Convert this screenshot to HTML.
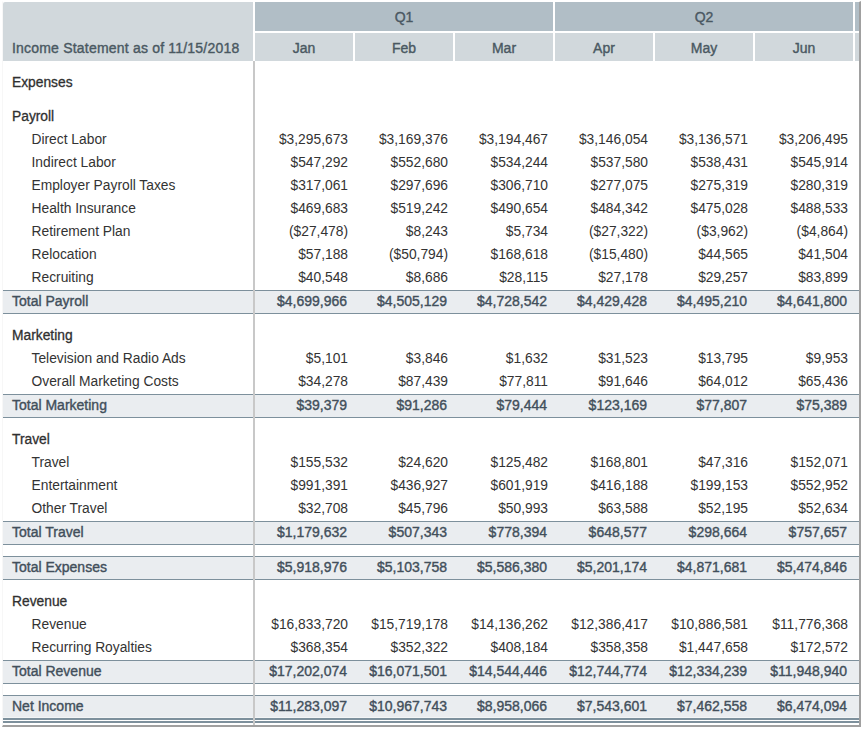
<!DOCTYPE html><html><head><meta charset="utf-8"><style>
html,body{margin:0;padding:0;background:#fff;}
body{width:863px;height:729px;overflow:hidden;position:relative;font-family:"Liberation Sans",sans-serif;}
.b{position:absolute;}
.t{position:absolute;white-space:nowrap;height:23px;line-height:23px;font-size:14px;}
.r{text-align:right;}
.hd{font-size:14px;color:#4a5862;-webkit-text-stroke:0.38px #4a5862;}
.sec{font-size:13.8px;color:#303030;-webkit-text-stroke:0.3px #303030;}
.lbl{font-size:13.8px;color:#333333;}
.num{font-size:13.8px;color:#333333;}
.tot{font-size:14px;color:#424f5b;-webkit-text-stroke:0.38px #424f5b;}

</style></head><body>
<div class="b" style="left:2px;top:1px;width:856px;height:723px;background:#fff;border-style:solid;border-width:1px 2px 2px 1px;border-color:#fff #a0a0a0 #a0a0a0 #f7f7f7"></div>
<div class="b" style="left:3px;top:2px;width:250px;height:59px;background:#d1d8dc;border-top-left-radius:2px"></div>
<div class="t hd" style="left:12px;top:37px;letter-spacing:0.2px">Income Statement as of 11/15/2018</div>
<div class="b" style="left:255px;top:2px;width:298px;height:29px;background:#b1bec6"></div>
<div class="t hd" style="left:255px;top:6px;width:298px;text-align:center">Q1</div>
<div class="b" style="left:555px;top:2px;width:298px;height:29px;background:#b1bec6"></div>
<div class="t hd" style="left:555px;top:6px;width:298px;text-align:center">Q2</div>
<div class="b" style="left:855px;top:2px;width:4px;height:29px;background:#b1bec6"></div>
<div class="b" style="left:255px;top:33px;width:98px;height:28px;background:#d1d8dc"></div>
<div class="t hd" style="left:255px;top:37px;width:98px;text-align:center">Jan</div>
<div class="b" style="left:355px;top:33px;width:98px;height:28px;background:#d1d8dc"></div>
<div class="t hd" style="left:355px;top:37px;width:98px;text-align:center">Feb</div>
<div class="b" style="left:455px;top:33px;width:98px;height:28px;background:#d1d8dc"></div>
<div class="t hd" style="left:455px;top:37px;width:98px;text-align:center">Mar</div>
<div class="b" style="left:555px;top:33px;width:98px;height:28px;background:#d1d8dc"></div>
<div class="t hd" style="left:555px;top:37px;width:98px;text-align:center">Apr</div>
<div class="b" style="left:655px;top:33px;width:98px;height:28px;background:#d1d8dc"></div>
<div class="t hd" style="left:655px;top:37px;width:98px;text-align:center">May</div>
<div class="b" style="left:755px;top:33px;width:98px;height:28px;background:#d1d8dc"></div>
<div class="t hd" style="left:755px;top:37px;width:98px;text-align:center">Jun</div>
<div class="b" style="left:855px;top:33px;width:4px;height:28px;background:#d1d8dc"></div>
<div class="t sec" style="left:12px;top:71px">Expenses</div>
<div class="t sec" style="left:12px;top:105px">Payroll</div>
<div class="t lbl" style="left:31.5px;top:128px">Direct Labor</div>
<div class="t r num" style="right:515px;top:128px">$3,295,673</div>
<div class="t r num" style="right:415px;top:128px">$3,169,376</div>
<div class="t r num" style="right:315px;top:128px">$3,194,467</div>
<div class="t r num" style="right:215px;top:128px">$3,146,054</div>
<div class="t r num" style="right:115px;top:128px">$3,136,571</div>
<div class="t r num" style="right:15px;top:128px">$3,206,495</div>
<div class="t lbl" style="left:31.5px;top:151px">Indirect Labor</div>
<div class="t r num" style="right:515px;top:151px">$547,292</div>
<div class="t r num" style="right:415px;top:151px">$552,680</div>
<div class="t r num" style="right:315px;top:151px">$534,244</div>
<div class="t r num" style="right:215px;top:151px">$537,580</div>
<div class="t r num" style="right:115px;top:151px">$538,431</div>
<div class="t r num" style="right:15px;top:151px">$545,914</div>
<div class="t lbl" style="left:31.5px;top:174px">Employer Payroll Taxes</div>
<div class="t r num" style="right:515px;top:174px">$317,061</div>
<div class="t r num" style="right:415px;top:174px">$297,696</div>
<div class="t r num" style="right:315px;top:174px">$306,710</div>
<div class="t r num" style="right:215px;top:174px">$277,075</div>
<div class="t r num" style="right:115px;top:174px">$275,319</div>
<div class="t r num" style="right:15px;top:174px">$280,319</div>
<div class="t lbl" style="left:31.5px;top:197px">Health Insurance</div>
<div class="t r num" style="right:515px;top:197px">$469,683</div>
<div class="t r num" style="right:415px;top:197px">$519,242</div>
<div class="t r num" style="right:315px;top:197px">$490,654</div>
<div class="t r num" style="right:215px;top:197px">$484,342</div>
<div class="t r num" style="right:115px;top:197px">$475,028</div>
<div class="t r num" style="right:15px;top:197px">$488,533</div>
<div class="t lbl" style="left:31.5px;top:220px">Retirement Plan</div>
<div class="t r num" style="right:515px;top:220px">($27,478)</div>
<div class="t r num" style="right:415px;top:220px">$8,243</div>
<div class="t r num" style="right:315px;top:220px">$5,734</div>
<div class="t r num" style="right:215px;top:220px">($27,322)</div>
<div class="t r num" style="right:115px;top:220px">($3,962)</div>
<div class="t r num" style="right:15px;top:220px">($4,864)</div>
<div class="t lbl" style="left:31.5px;top:243px">Relocation</div>
<div class="t r num" style="right:515px;top:243px">$57,188</div>
<div class="t r num" style="right:415px;top:243px">($50,794)</div>
<div class="t r num" style="right:315px;top:243px">$168,618</div>
<div class="t r num" style="right:215px;top:243px">($15,480)</div>
<div class="t r num" style="right:115px;top:243px">$44,565</div>
<div class="t r num" style="right:15px;top:243px">$41,504</div>
<div class="t lbl" style="left:31.5px;top:266px">Recruiting</div>
<div class="t r num" style="right:515px;top:266px">$40,548</div>
<div class="t r num" style="right:415px;top:266px">$8,686</div>
<div class="t r num" style="right:315px;top:266px">$28,115</div>
<div class="t r num" style="right:215px;top:266px">$27,178</div>
<div class="t r num" style="right:115px;top:266px">$29,257</div>
<div class="t r num" style="right:15px;top:266px">$83,899</div>
<div class="b" style="left:3px;top:290px;width:856px;height:1px;background:#7d909c"></div>
<div class="b" style="left:3px;top:291px;width:856px;height:22px;background:#eaedf0"></div>
<div class="b" style="left:3px;top:313px;width:856px;height:1px;background:#7d909c"></div>
<div class="t tot" style="left:12px;top:290px">Total Payroll</div>
<div class="t r tot" style="right:516px;top:290px">$4,699,966</div>
<div class="t r tot" style="right:416px;top:290px">$4,505,129</div>
<div class="t r tot" style="right:316px;top:290px">$4,728,542</div>
<div class="t r tot" style="right:216px;top:290px">$4,429,428</div>
<div class="t r tot" style="right:116px;top:290px">$4,495,210</div>
<div class="t r tot" style="right:16px;top:290px">$4,641,800</div>
<div class="t sec" style="left:12px;top:324px">Marketing</div>
<div class="t lbl" style="left:31.5px;top:347px">Television and Radio Ads</div>
<div class="t r num" style="right:515px;top:347px">$5,101</div>
<div class="t r num" style="right:415px;top:347px">$3,846</div>
<div class="t r num" style="right:315px;top:347px">$1,632</div>
<div class="t r num" style="right:215px;top:347px">$31,523</div>
<div class="t r num" style="right:115px;top:347px">$13,795</div>
<div class="t r num" style="right:15px;top:347px">$9,953</div>
<div class="t lbl" style="left:31.5px;top:370px">Overall Marketing Costs</div>
<div class="t r num" style="right:515px;top:370px">$34,278</div>
<div class="t r num" style="right:415px;top:370px">$87,439</div>
<div class="t r num" style="right:315px;top:370px">$77,811</div>
<div class="t r num" style="right:215px;top:370px">$91,646</div>
<div class="t r num" style="right:115px;top:370px">$64,012</div>
<div class="t r num" style="right:15px;top:370px">$65,436</div>
<div class="b" style="left:3px;top:394px;width:856px;height:1px;background:#7d909c"></div>
<div class="b" style="left:3px;top:395px;width:856px;height:22px;background:#eaedf0"></div>
<div class="b" style="left:3px;top:417px;width:856px;height:1px;background:#7d909c"></div>
<div class="t tot" style="left:12px;top:394px">Total Marketing</div>
<div class="t r tot" style="right:516px;top:394px">$39,379</div>
<div class="t r tot" style="right:416px;top:394px">$91,286</div>
<div class="t r tot" style="right:316px;top:394px">$79,444</div>
<div class="t r tot" style="right:216px;top:394px">$123,169</div>
<div class="t r tot" style="right:116px;top:394px">$77,807</div>
<div class="t r tot" style="right:16px;top:394px">$75,389</div>
<div class="t sec" style="left:12px;top:428px">Travel</div>
<div class="t lbl" style="left:31.5px;top:451px">Travel</div>
<div class="t r num" style="right:515px;top:451px">$155,532</div>
<div class="t r num" style="right:415px;top:451px">$24,620</div>
<div class="t r num" style="right:315px;top:451px">$125,482</div>
<div class="t r num" style="right:215px;top:451px">$168,801</div>
<div class="t r num" style="right:115px;top:451px">$47,316</div>
<div class="t r num" style="right:15px;top:451px">$152,071</div>
<div class="t lbl" style="left:31.5px;top:474px">Entertainment</div>
<div class="t r num" style="right:515px;top:474px">$991,391</div>
<div class="t r num" style="right:415px;top:474px">$436,927</div>
<div class="t r num" style="right:315px;top:474px">$601,919</div>
<div class="t r num" style="right:215px;top:474px">$416,188</div>
<div class="t r num" style="right:115px;top:474px">$199,153</div>
<div class="t r num" style="right:15px;top:474px">$552,952</div>
<div class="t lbl" style="left:31.5px;top:497px">Other Travel</div>
<div class="t r num" style="right:515px;top:497px">$32,708</div>
<div class="t r num" style="right:415px;top:497px">$45,796</div>
<div class="t r num" style="right:315px;top:497px">$50,993</div>
<div class="t r num" style="right:215px;top:497px">$63,588</div>
<div class="t r num" style="right:115px;top:497px">$52,195</div>
<div class="t r num" style="right:15px;top:497px">$52,634</div>
<div class="b" style="left:3px;top:521px;width:856px;height:1px;background:#7d909c"></div>
<div class="b" style="left:3px;top:522px;width:856px;height:22px;background:#eaedf0"></div>
<div class="b" style="left:3px;top:544px;width:856px;height:1px;background:#7d909c"></div>
<div class="t tot" style="left:12px;top:521px">Total Travel</div>
<div class="t r tot" style="right:516px;top:521px">$1,179,632</div>
<div class="t r tot" style="right:416px;top:521px">$507,343</div>
<div class="t r tot" style="right:316px;top:521px">$778,394</div>
<div class="t r tot" style="right:216px;top:521px">$648,577</div>
<div class="t r tot" style="right:116px;top:521px">$298,664</div>
<div class="t r tot" style="right:16px;top:521px">$757,657</div>
<div class="b" style="left:3px;top:556px;width:856px;height:1px;background:#7d909c"></div>
<div class="b" style="left:3px;top:557px;width:856px;height:22px;background:#eaedf0"></div>
<div class="b" style="left:3px;top:579px;width:856px;height:1px;background:#7d909c"></div>
<div class="t tot" style="left:12px;top:556px">Total Expenses</div>
<div class="t r tot" style="right:516px;top:556px">$5,918,976</div>
<div class="t r tot" style="right:416px;top:556px">$5,103,758</div>
<div class="t r tot" style="right:316px;top:556px">$5,586,380</div>
<div class="t r tot" style="right:216px;top:556px">$5,201,174</div>
<div class="t r tot" style="right:116px;top:556px">$4,871,681</div>
<div class="t r tot" style="right:16px;top:556px">$5,474,846</div>
<div class="t sec" style="left:12px;top:590px">Revenue</div>
<div class="t lbl" style="left:31.5px;top:613px">Revenue</div>
<div class="t r num" style="right:515px;top:613px">$16,833,720</div>
<div class="t r num" style="right:415px;top:613px">$15,719,178</div>
<div class="t r num" style="right:315px;top:613px">$14,136,262</div>
<div class="t r num" style="right:215px;top:613px">$12,386,417</div>
<div class="t r num" style="right:115px;top:613px">$10,886,581</div>
<div class="t r num" style="right:15px;top:613px">$11,776,368</div>
<div class="t lbl" style="left:31.5px;top:636px">Recurring Royalties</div>
<div class="t r num" style="right:515px;top:636px">$368,354</div>
<div class="t r num" style="right:415px;top:636px">$352,322</div>
<div class="t r num" style="right:315px;top:636px">$408,184</div>
<div class="t r num" style="right:215px;top:636px">$358,358</div>
<div class="t r num" style="right:115px;top:636px">$1,447,658</div>
<div class="t r num" style="right:15px;top:636px">$172,572</div>
<div class="b" style="left:3px;top:660px;width:856px;height:1px;background:#7d909c"></div>
<div class="b" style="left:3px;top:661px;width:856px;height:22px;background:#eaedf0"></div>
<div class="b" style="left:3px;top:683px;width:856px;height:1px;background:#7d909c"></div>
<div class="t tot" style="left:12px;top:660px">Total Revenue</div>
<div class="t r tot" style="right:516px;top:660px">$17,202,074</div>
<div class="t r tot" style="right:416px;top:660px">$16,071,501</div>
<div class="t r tot" style="right:316px;top:660px">$14,544,446</div>
<div class="t r tot" style="right:216px;top:660px">$12,744,774</div>
<div class="t r tot" style="right:116px;top:660px">$12,334,239</div>
<div class="t r tot" style="right:16px;top:660px">$11,948,940</div>
<div class="b" style="left:3px;top:695px;width:856px;height:1px;background:#7d909c"></div>
<div class="b" style="left:3px;top:696px;width:856px;height:21px;background:#eaedf0"></div>
<div class="b" style="left:3px;top:717px;width:856px;height:1px;background:#f3f5f6"></div>
<div class="b" style="left:3px;top:718px;width:856px;height:2px;background:#7d909c"></div>
<div class="b" style="left:3px;top:721px;width:856px;height:2px;background:#7d909c"></div>
<div class="t tot" style="left:12px;top:695px">Net Income</div>
<div class="t r tot" style="right:516px;top:695px">$11,283,097</div>
<div class="t r tot" style="right:416px;top:695px">$10,967,743</div>
<div class="t r tot" style="right:316px;top:695px">$8,958,066</div>
<div class="t r tot" style="right:216px;top:695px">$7,543,601</div>
<div class="t r tot" style="right:116px;top:695px">$7,462,558</div>
<div class="t r tot" style="right:16px;top:695px">$6,474,094</div>
<div class="b" style="left:253px;top:61px;width:2px;height:664px;background:#c8c8c8"></div>
</body></html>
